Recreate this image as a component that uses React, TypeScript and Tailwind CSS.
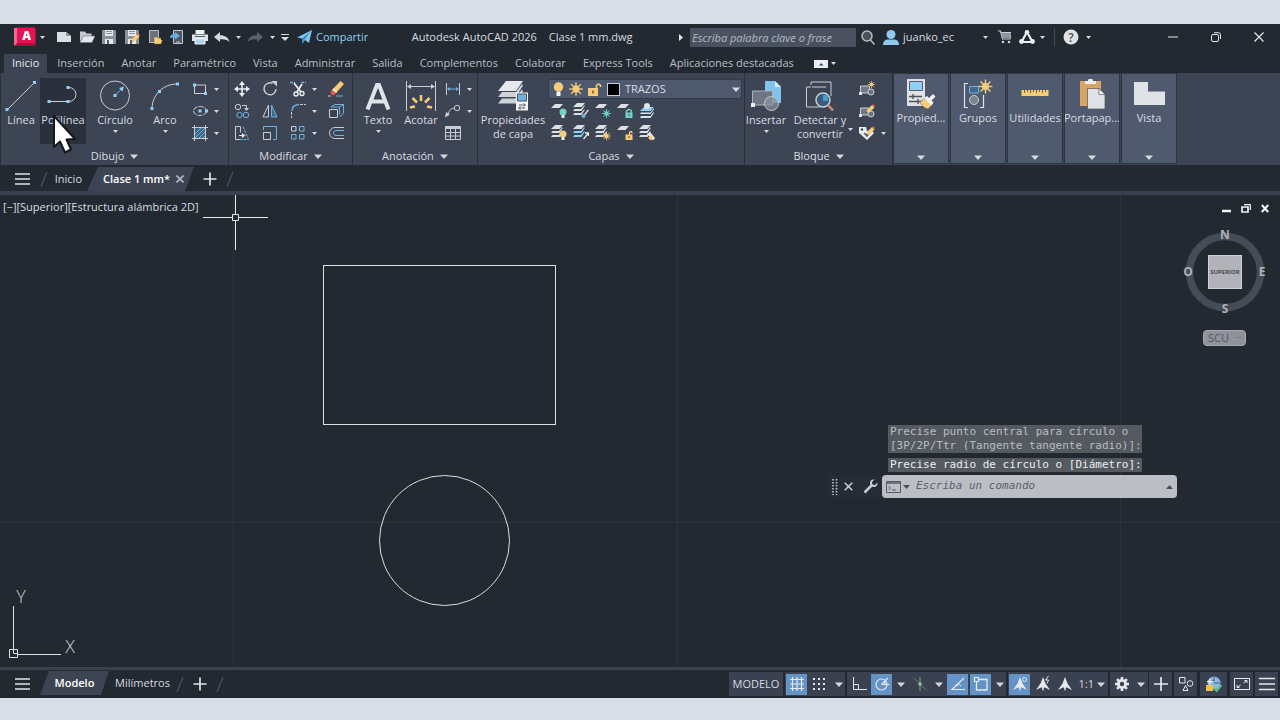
import React from "react";

type IconProps = { w: number; h: number; children: React.ReactNode; className?: string };

function Icon({ w, h, children, className }: IconProps) {
  return (
    <svg width={w} height={h} viewBox={`0 0 ${w} ${h}`} fill="none" className={className} aria-hidden="true">
      {children}
    </svg>
  );
}

const L = "#c9ced6";
const B = "#6fb3de";
const P = "#8fd0f5";
const Y = "#f5cd78";
const T = "#6fd3cc";

function Caret({ big = false }: { big?: boolean }) {
  return big ? (
    <Icon w={8} h={5} className="shrink-0">
      <path d="M0 0.5h8L4 5z" fill="#d6dae0" />
    </Icon>
  ) : (
    <Icon w={5} h={3} className="shrink-0">
      <path d="M0 0h5L2.500 3z" fill="#d6dae0" />
    </Icon>
  );
}

function Btn({ label, className = "w-[22px] h-[22px]", children }: { label: string; className?: string; children: React.ReactNode }) {
  return (
    <button type="button" aria-label={label} className={`flex shrink-0 items-center justify-center ${className}`}>
      {children}
    </button>
  );
}

function Drop({ label, className = "h-[22px] w-2.5" }: { label: string; className?: string }) {
  return (
    <Btn label={label} className={className}>
      <Caret />
    </Btn>
  );
}

/* ---------- Quick access icons ---------- */

const Floppy = () => (
  <>
    <path d="M1 1h13l1 1v13H1z" fill="#8b929c" />
    <path d="M4 1h8v6H4z" fill="#e6e8ec" />
    <path d="M5 2.500h6M5 4.500h6" stroke="#8b929c" />
    <path d="M4 10h8v5H4z" fill="#e6e8ec" />
    <path d="M6 11h2v4H6z" fill="#59606b" />
  </>
);

const Pencil = () => (
  <>
    <path d="M7 13l1-3 5-5 2.500 2.500-5 5z" fill={Y} />
    <path d="M13 5l1-1 2 2-.8 1.300z" fill="#e0584f" />
    <path d="M7 13l.5-1.500 1.200 1z" fill="#222" />
  </>
);

const quickAccess: { label: string; icon: React.ReactNode }[] = [
  { label: "Nuevo", icon: <Icon w={16} h={16}><path d="M1 3h9l5 4v6H1z" fill="#dcdfe4" /><path d="M10 3v4h5z" fill="#9299a3" /></Icon> },
  {
    label: "Abrir",
    icon: <Icon w={16} h={16}><path d="M1 13V2.500h5l1.500 2h5V7H5z" fill="#c3c8d0" /><path d="M4.500 7H16l-3 6.500H1z" fill="#e4e6ea" stroke="#6b727d" strokeWidth=".6" /></Icon>,
  },
  { label: "Guardar", icon: <Icon w={16} h={16}><Floppy /></Icon> },
  { label: "Guardar como", icon: <Icon w={16} h={16}><Floppy /><Pencil /></Icon> },
  {
    label: "Abrir desde web",
    icon: <Icon w={16} h={16}><path d="M2.500 1.500h9v12h-9z" fill="#6d737c" stroke="#b9bec6" /><path d="M7 15V8h3l1 1h3v2h1.500L14 15z" fill={Y} stroke="#5f5233" strokeWidth=".4" /></Icon>,
  },
  {
    label: "Guardar en web",
    icon: <Icon w={16} h={16}><path d="M4.500 1.500h9v13h-9z" fill="#4f5661" stroke="#c3c8d0" /><path d="M7 13h4" stroke="#c3c8d0" /><path d="M1 9c0-3 2-4 5-4V3l5 3.700L6 10.500v-2C4 8.500 2 8.500 1 9z" fill="#62b0e6" /></Icon>,
  },
  {
    label: "Imprimir",
    icon: <Icon w={16} h={16}><path d="M3.500 1h9v4h-9z" fill="#f2f3f5" /><path d="M0 5.500h16V12H0z" fill="#dfe2e7" /><path d="M3 7.500h10" stroke="#5a616c" /><path d="M3 10h10v5H3z" fill="#a6d4f1" stroke="#eef0f3" /></Icon>,
  },
];

const UndoArrow = ({ color }: { color: string }) => (
  <path d="M0 6l6-5v3.200c5 0 8.500 2 9.500 7C13.500 8.500 10.500 8 6 8.200V11z" fill={color} />
);

function TitleBar() {
  return (
    <header className="flex h-[26px] shrink-0 items-center">
      <button type="button" aria-label="Menú de la aplicación" className="ml-3.5 flex w-8 shrink-0 items-center gap-1">
        <Icon w={22} h={20}>
          <path d="M0 1l4-1h16l2 2v16l-2 1H2l-2-1z" fill="#a80f3e" />
          <path d="M0 1l3 0v15l-3 3z" fill="#ee6a8e" />
          <path d="M3 1h18v15H3z" fill="#e01552" />
          <text x="12.500" y="13" textAnchor="middle" fontSize="12" fontWeight="800" fill="#fff">A</text>
        </Icon>
        <Caret />
      </button>
      <div className="ml-[7px] grid w-[158px] shrink-0 grid-cols-7">
        {quickAccess.map((q) => (
          <Btn key={q.label} label={q.label} className="h-5">{q.icon}</Btn>
        ))}
      </div>
      <Btn label="Deshacer" className="h-5 w-[22px]"><Icon w={16} h={13}><UndoArrow color="#d5d9df" /></Icon></Btn>
      <Drop label="Lista de deshacer" />
      <Btn label="Rehacer" className="h-5 w-6"><Icon w={16} h={13}><g transform="translate(16 0) scale(-1 1)"><UndoArrow color="#59616c" /></g></Icon></Btn>
      <Drop label="Lista de rehacer" />
      <Btn label="Personalizar barra" className="h-5 w-4">
        <Icon w={8} h={7}><path d="M0 .5h8" stroke="#d6dae0" /><path d="M0 3h8L4 7z" fill="#d6dae0" /></Icon>
      </Btn>
      <a href="#compartir" className="ml-1 flex shrink-0 items-center gap-1 text-[#8fd0f5]">
        <Icon w={15} h={14}>
          <path d="M0 7.500L15 0l-3 13-4-3-2.500 3.500-.5-5z" fill="#7cc6f2" />
          <path d="M5 8.500L13 2 7.500 9.500 5.600 13z" fill="#3c83b4" />
        </Icon>
        Compartir
      </a>
      <h1 className="flex min-w-0 flex-1 justify-center gap-3 truncate">
        <span>Autodesk AutoCAD 2026</span>
        <span>Clase 1 mm.dwg</span>
      </h1>
      <Btn label="Contraer búsqueda" className="h-5 w-2.5"><Icon w={4} h={7}><path d="M0 0v7l4-3.500z" fill="#e6e8ec" /></Icon></Btn>
      <input
        aria-label="Buscar ayuda"
        placeholder="Escriba palabra clave o frase"
        className="ml-1 h-[19px] w-[166px] shrink-0 bg-[#4a5262] px-0.5 italic text-[#c5cad3] outline-none placeholder:text-[#b4bac5]"
      />
      <Btn label="Buscar" className="h-5 w-6">
        <Icon w={14} h={15}><circle cx="6" cy="6" r="5" stroke="#b9bec6" strokeWidth="1.500" fill="#4a515c" /><path d="M9.500 10l4 4.500" stroke="#b9bec6" strokeWidth="1.500" /></Icon>
      </Btn>
      <button type="button" className="ml-[3px] flex w-[94px] shrink-0 items-center gap-1">
        <Icon w={16} h={15}><circle cx="8" cy="4.500" r="4.500" fill="#8fc9ee" /><path d="M0 15c0-4 2.500-5.500 5-5.500h6c2.500 0 5 1.500 5 5.500z" fill="#8fc9ee" /></Icon>
        juanko_ec
      </button>
      <Drop label="Cuenta" className="ml-[3px] h-5 w-2.5" />
      <Btn label="App Store" className="ml-0.5 h-5 w-6">
        <Icon w={13} h={14}><path d="M0 1h2.500l2 8H12l1-6.500H3" stroke={L} strokeWidth="1.200" /><path d="M3 3h10l-1 5H4.500z" fill="#8d949f" /><circle cx="5" cy="12" r="1.300" fill={L} /><circle cx="11" cy="12" r="1.300" fill={L} /></Icon>
      </Btn>
      <Btn label="Autodesk" className="ml-px h-5 w-5">
        <Icon w={16} h={14}><path d="M8 2L2.500 12h11z" stroke="#eceef1" strokeWidth="2.200" /><circle cx="8" cy="2.300" r="2.300" fill="#eceef1" /><circle cx="2.500" cy="11.500" r="2.400" fill="#eceef1" /><circle cx="13.500" cy="11.500" r="2.400" fill="#eceef1" /></Icon>
      </Btn>
      <Drop label="Opciones de Autodesk" />
      <span className="ml-[7px] h-[18px] w-px shrink-0 bg-[#444b57]" />
      <Btn label="Ayuda" className="ml-1 h-5 w-6">
        <Icon w={16} h={16}><circle cx="8" cy="8" r="7.500" fill="#dfe1e5" /><text x="8" y="12.500" textAnchor="middle" fontSize="12" fontWeight="600" fill="#4a515c">?</text></Icon>
      </Btn>
      <Drop label="Opciones de ayuda" />
      <div className="ml-[58px] flex shrink-0">
        <Btn label="Minimizar" className="h-5 w-[43px]"><Icon w={10} h={2}><path d="M0 1h10" stroke="#e6e8ec" /></Icon></Btn>
        <Btn label="Restaurar" className="h-5 w-[43px]"><Icon w={10} h={10}><rect x=".5" y="2.500" width="7" height="7" rx="1.500" stroke="#e6e8ec" /><path d="M3 .7h4.500q2 0 2 2V7" stroke="#e6e8ec" /></Icon></Btn>
        <Btn label="Cerrar" className="h-5 w-[43px]"><Icon w={10} h={10}><path d="M.5.5l9 9M9.500.5l-9 9" stroke="#e6e8ec" strokeWidth="1.200" /></Icon></Btn>
      </div>
    </header>
  );
}

const menuTabs = ["Inserción", "Anotar", "Paramétrico", "Vista", "Administrar", "Salida", "Complementos", "Colaborar", "Express Tools", "Aplicaciones destacadas"];

function MenuTabs() {
  return (
    <nav className="mt-1 flex h-[19px] shrink-0 items-stretch pl-1 text-[#b9bfc9]">
      <button type="button" className="bg-[#3d4454] px-2 text-[#e6e9ee]">Inicio</button>
      <div className="ml-2.5 flex gap-[17px]">
        {menuTabs.map((t) => (
          <button key={t} type="button" className="whitespace-nowrap">{t}</button>
        ))}
      </div>
      <button type="button" aria-label="Minimizar cinta" className="ml-5 flex items-center gap-[3px]">
        <Icon w={14} h={8}><path d="M0 0h14v8H0z" fill="#eceef1" /><path d="M5 5.500h4.500L7.200 3z" fill="#3d4454" /></Icon>
        <Caret />
      </button>
    </nav>
  );
}

/* ---------- Ribbon ---------- */

function Big({ label, icon, className, drop, hover }: { label: React.ReactNode; icon: React.ReactNode; className: string; drop?: boolean; hover?: boolean }) {
  return (
    <button type="button" className={`flex h-[66px] shrink-0 flex-col items-center ${hover ? "bg-[#2a303c]" : ""} ${className}`}>
      <span className="flex h-[35px] items-center justify-center">{icon}</span>
      <span className="whitespace-nowrap leading-[14px]">{label}</span>
      {drop && <span className="mt-[3px]"><Caret /></span>}
    </button>
  );
}

function Panel({ title, className, children }: { title: string; className: string; children: React.ReactNode }) {
  return (
    <section className={`flex shrink-0 flex-col border-r border-[#2a303b] pt-[5px] ${className}`}>
      <div className="flex flex-1">{children}</div>
      <button type="button" className="flex h-[18px] items-center justify-center gap-1.5">
        {title}
        <Caret big />
      </button>
    </section>
  );
}

type Tool = { label: string; icon: React.ReactNode; drop?: boolean };

function ToolColumn({ tools, className = "" }: { tools: Tool[]; className?: string }) {
  return (
    <div className={`flex flex-col ${className}`}>
      {tools.map((t) => (
        <div key={t.label} className="flex">
          <Btn label={t.label}>{t.icon}</Btn>
          {t.drop && <Drop label={`Más opciones de ${t.label}`} />}
        </div>
      ))}
    </div>
  );
}

const Dot = ({ x, y }: { x: number; y: number }) => <rect x={x - 1.5} y={y - 1.5} width="3" height="3" fill={P} />;

const drawTools: Tool[] = [
  { label: "Rectángulo", drop: true, icon: <Icon w={16} h={14}><path d="M2.500 3h11v8.500h-11z" stroke={L} /><Dot x={2.500} y={3} /><Dot x={13.500} y={11.500} /></Icon> },
  { label: "Elipse", drop: true, icon: <Icon w={16} h={12}><ellipse cx="8" cy="6" rx="6.500" ry="4.500" stroke={L} strokeDasharray="5 1" /><Dot x={8} y={6} /><Dot x={14.500} y={6} /></Icon> },
  { label: "Sombreado", drop: true, icon: <Icon w={16} h={16}><path d="M3 3h10v10H3z" fill="#3f6680" /><path d="M3 9l6-6M3 13L13 3M7 13l6-6M11 13l2-2" stroke={B} /><path d="M2.500 0v16M13.500 0v16M0 2.500h16M0 13.500h16" stroke={L} /></Icon> },
];

const modA: Tool[] = [
  { label: "Desplazar", icon: <Icon w={16} h={16}><path d="M8 2v12M2 8h12" stroke="#eceef1" strokeWidth="1.600" /><path d="M8 0l3 4H5zM8 16l3-4H5zM0 8l4-3v6zM16 8l-4-3v6z" fill="#eceef1" /></Icon> },
  { label: "Copiar", icon: <Icon w={16} h={16}><circle cx="4" cy="4" r="2.700" stroke={L} /><circle cx="5.500" cy="12" r="2.700" stroke={B} /><circle cx="12" cy="12" r="2.700" stroke={B} /><path d="M8 2.500h4.500v3" stroke={L} /><path d="M10 5h5l-2.500 3z" fill={L} /></Icon> },
  { label: "Estirar", icon: <Icon w={16} h={16}><path d="M6.500 14.500h-5v-13h5v6" stroke={L} /><path d="M9 1.500l5.500 13H5" stroke={B} strokeDasharray="3 1" /><path d="M5 10.500h4" stroke="#eceef1" /><path d="M8 8l3.500 2.500L8 13z" fill="#eceef1" /></Icon> },
];
const modB: Tool[] = [
  { label: "Girar", icon: <Icon w={16} h={16}><path d="M10.500 2.300A6 6 0 1 0 14 8" stroke={L} strokeWidth="1.400" /><path d="M9 0h6v5.500z" fill={L} /></Icon> },
  { label: "Simetría", icon: <Icon w={16} h={14}><path d="M6.500 1v12H1z" stroke={L} /><path d="M9.500 1v12H15z" fill="#3d6a89" stroke={B} /></Icon> },
  { label: "Escala", icon: <Icon w={16} h={16}><path d="M1.500 5V1.500h13v13H11" stroke={B} /><path d="M1.500 7.500h7v7h-7z" stroke={L} /></Icon> },
];
const modC: Tool[] = [
  { label: "Recortar", drop: true, icon: <Icon w={16} h={16}><path d="M0 1.500h5M11 1.500h5" stroke={B} strokeWidth="1.300" strokeDasharray="3 1" /><path d="M4 2l7 9M12 3L7 11" stroke="#eceef1" strokeWidth="1.700" /><circle cx="6" cy="13" r="2" stroke="#eceef1" strokeWidth="1.400" /><circle cx="12" cy="12.500" r="2" stroke="#eceef1" strokeWidth="1.400" /></Icon> },
  { label: "Empalme", drop: true, icon: <Icon w={16} h={16}><path d="M2 8Q2 2 9 1.500" stroke={B} strokeWidth="1.300" /><path d="M1.500 9v6M10 1.500h6" stroke={L} strokeDasharray="3 1" /></Icon> },
  { label: "Matriz", drop: true, icon: <Icon w={16} h={16}><path d="M1.500 1.500h4.500v4.500H1.500z" stroke={L} /><path d="M9.500 1.500h4.500v4.500H9.500zM1.500 9.500h4.500v4.500H1.500zM9.500 9.500h4.500v4.500H9.500z" stroke={B} /></Icon> },
];
const modD: Tool[] = [
  { label: "Borrar", icon: <Icon w={16} h={16}><path d="M4 9l8.500-9L16 3 8 12z" fill={Y} /><path d="M4 8.500l4 3.500-1.500 2c-2 1-4-1-4-3z" fill="#e4574f" /><path d="M4.800 8l3.800 3.400" stroke="#f2f3f5" strokeWidth="1.500" /><path d="M8 15h7" stroke={B} /><path d="M0 15h3" stroke={L} /></Icon> },
  { label: "Descomponer", icon: <Icon w={16} h={16}><path d="M1.500 6.500h8v8h-8z" stroke={L} /><path d="M3 4l4-2.500h8.500V10L12 14M3 4h8.500v7.500M11.500 4l4-2.500" stroke={B} /></Icon> },
  { label: "Desfase", icon: <Icon w={16} h={14}><path d="M16 1.500H7a5.500 5.500 0 0 0 0 11h9" stroke={L} /><path d="M16 4.500H8a2.500 2.500 0 0 0 0 5h8" stroke={B} /></Icon> },
];

const annoTools: Tool[] = [
  { label: "Cota lineal", drop: true, icon: <Icon w={16} h={14}><path d="M1.500 1v12M14.500 1v12" stroke={L} /><path d="M3 7h10" stroke={B} /><path d="M2 7l3-2v4zM14 7l-3-2v4z" fill={B} /></Icon> },
  { label: "Directriz", drop: true, icon: <Icon w={16} h={14}><circle cx="12" cy="4" r="2.700" stroke={L} /><path d="M9.500 4.500C6 4 5 5 2.500 11" stroke={L} /><path d="M0 13.500L1 8l4 2.500z" fill={L} /></Icon> },
  { label: "Tabla", icon: <Icon w={16} h={14}><path d="M.5.500h15v13H.5z" stroke={L} /><path d="M.5 2h15" stroke={L} strokeWidth="2" /><path d="M.5 6.500h15M.5 10h15M5.500 3v10.500M10.500 3v10.500" stroke={L} /></Icon> },
];

const Sheet = ({ y, c = "#dcdfe4" }: { y: number; c?: string }) => <path d={`M0 ${y + 4}L4 ${y}h8L8.500 ${y + 4}z`} fill={c} />;
const Stack = ({ mid = "#dcdfe4" }: { mid?: string }) => (
  <>
    <Sheet y={0} />
    <path d="M0 8l1.500-2h6.500l3-3.500h1L8.500 8zM0 12l1.500-2h6.500l3-3.500h1L8.500 12z" fill={mid} />
  </>
);
const Bulb = ({ c }: { c: string }) => (
  <>
    <circle cx="12" cy="9" r="3.500" fill={c} />
    <path d="M10.500 12h3v3h-3z" fill="#eceef1" />
  </>
);
const Lock = ({ c, open }: { c: string; open?: boolean }) => (
  <>
    <path d={open ? "M12.500 10V7.500q2.500-2.500 2.500 1" : "M9.500 10V8q2.500-3 5 0v2"} stroke={c} strokeWidth="1.300" />
    <path d="M8.500 9.500h7V15h-7z" fill={c} />
    <path d="M12 11v2" stroke="#444" />
  </>
);
const Sun = ({ cx, cy, r, c = Y }: { cx: number; cy: number; r: number; c?: string }) => (
  <>
    <circle cx={cx} cy={cy} r={r} fill={c} />
    {[0, 45, 90, 135].map((a) => (
      <path key={a} d={`M${cx} ${cy - r * 2}V${cy + r * 2}`} stroke={c} strokeWidth={r / 2.5} transform={`rotate(${a} ${cx} ${cy})`} />
    ))}
  </>
);

const layerRows: Tool[][] = [
  [
    { label: "Desactivar capa", icon: <Icon w={16} h={16}><Sheet y={1} /><Bulb c={T} /></Icon> },
    { label: "Aislar capa", icon: <Icon w={16} h={16}><Stack /><path d="M15.500 7l-5 6" stroke="#d9dce2" strokeWidth="1.500" /><circle cx="10.500" cy="13" r="2" fill={B} /></Icon> },
    { label: "Inutilizar capa", icon: <Icon w={16} h={16}><Sheet y={1} /><Sun cx={11.500} cy={10.500} r={2.200} c={T} /></Icon> },
    { label: "Bloquear capa", icon: <Icon w={16} h={16}><Sheet y={1} /><Lock c={T} /></Icon> },
    { label: "Definir como actual", icon: <Icon w={16} h={16}><path d="M1 8l4-4h10l-3.500 4z" fill={P} /><path d="M1 11l1-1.500h9.500l3-4 .5 1L11.500 11zM1 15l1-2h9.500l3-4 .5 1L11.500 15z" fill="#cfe6f5" /><circle cx="8" cy="3" r="3" fill="#e0e2e6" /></Icon> },
  ],
  [
    { label: "Activar capas", icon: <Icon w={16} h={16}><Stack /><Bulb c={Y} /></Icon> },
    { label: "Dejar de aislar", icon: <Icon w={16} h={16}><Stack mid={P} /><path d="M15.500 8l-5 6M12 8h3.500v3" stroke="#eceef1" strokeWidth="1.300" /></Icon> },
    { label: "Reutilizar capas", icon: <Icon w={16} h={16}><Stack /><Sun cx={11.500} cy={11} r={2.200} /></Icon> },
    { label: "Desbloquear capa", icon: <Icon w={16} h={16}><Sheet y={1} /><Lock c={Y} open /></Icon> },
    { label: "Igualar capa", icon: <Icon w={16} h={16}><Stack /><path d="M8 9l3-2 5 6-2 2.500z" fill="#e6e8ec" /><path d="M9 13l3-3 2 3-2 2.500z" fill={Y} /></Icon> },
  ],
];

const BlockShape = () => (
  <>
    <path d="M1.500 5h9v7h-9z" fill="#727985" stroke={L} />
    <circle cx="12" cy="11" r="3" fill="#69717d" stroke={L} />
    <path d="M0 11h3v3H0z" fill="#dfe2e7" />
  </>
);
const blockTools: Tool[] = [
  { label: "Crear bloque", icon: <Icon w={16} h={16}><BlockShape /><Sun cx={12.500} cy={3.500} r={1.800} /></Icon> },
  { label: "Editar bloque", icon: <Icon w={16} h={16}><BlockShape /><g transform="translate(0 -3)"><Pencil /></g></Icon> },
  { label: "Editar atributos", drop: true, icon: <Icon w={16} h={16}><path d="M0 2h7l1 4 4-1 3 3-7 7-8-7z" fill="#eceef1" /><circle cx="3" cy="4.500" r="1.200" fill="#3d4454" /><path d="M5 8l3 3 3-4" stroke="#555c68" strokeWidth="1.500" /><g transform="translate(0 -3)"><Pencil /></g></Icon> },
];

const collapsed: Tool[] = [
  {
    label: "Propied...",
    icon: (
      <Icon w={30} h={30}>
        <path d="M1 0h18v27H1z" fill="#e0e2e6" />
        <path d="M3.500 2.500h13v9h-13z" fill="#8fd0f5" stroke="#59606b" />
        <path d="M3 17.500h13M3 22.500h13M7 15v5M12 20v5" stroke="#4b525e" strokeWidth="1.400" />
        <path d="M14 23l5-4 7 7-4 4c-4-1-7-4-8-7z" fill={Y} stroke="#4f5a6e" strokeWidth=".5" />
        <path d="M18 19l3-2 2 2 4-4 2.500 2.500-4 4 2 2-2 3z" fill="#f2f3f5" />
      </Icon>
    ),
  },
  {
    label: "Grupos",
    icon: (
      <Icon w={30} h={30}>
        <path d="M5 4.500H1.500v24H5M17 28.500h3.500V16" stroke="#dfe2e7" strokeWidth="1.200" />
        <path d="M6.500 7.500h9V14h-9z" fill="#416a8a" stroke={B} />
        <circle cx="11" cy="21" r="4.500" fill="#7b8290" stroke="#c9ced6" />
        <Sun cx={22.500} cy={7.500} r={3.500} />
      </Icon>
    ),
  },
  {
    label: "Utilidades",
    icon: (
      <Icon w={30} h={30}>
        <path d="M1.500 11h27v6h-27z" fill={Y} />
        <path d="M4.500 11v3M7.500 11v2M10.500 11v3M13.500 11v2M16.500 11v3M19.500 11v2M22.500 11v3M25.500 11v2" stroke="#7a6334" />
      </Icon>
    ),
  },
  {
    label: "Portapap...",
    icon: (
      <Icon w={30} h={30}>
        <path d="M3 2h21v25H3z" fill="#d9a468" />
        <path d="M8 5V2h3a2.500 2.500 0 0 1 5 0h3v3z" fill="#eceef1" />
        <path d="M10.500 9.500H22l6 6V30H10.500z" fill="#dfe1e6" stroke="#5a5048" strokeWidth=".7" />
        <path d="M22 9.500v6h6z" fill="#f7f8f9" stroke="#444" strokeWidth=".6" />
      </Icon>
    ),
  },
  { label: "Vista", icon: <Icon w={32} h={30}><path d="M1 3h14v9.500h17V26H1z" fill="#e0e2e6" /></Icon> },
];

const SmallStackBig = () => (
  <Icon w={32} h={32}>
    <path d="M1 11L9 1h17l-7 10z" fill="#e6e8ec" />
    <path d="M1 17l4-5h14l6-8 1 1.500L19 17zM1 23.500l4-5h13l7-9 1 1.500-7 12.500z" fill="#cfd3d9" />
    <path d="M19 12.500h12v18H19z" fill="#f2f3f5" />
    <path d="M20.500 14h9v7h-9z" fill="#6fb3de" stroke="#4b525e" />
    <path d="M22 25h6M22 28h6M26.500 23.500l2 1.500-2 1.500M23.500 26.500l-2 1.500 2 1.500" stroke="#4b525e" strokeWidth=".9" />
  </Icon>
);

function Ribbon() {
  return (
    <div className="flex h-[92px] shrink-0 border-l border-[#2a303b] bg-[#3d4454]">
      <Panel title="Dibujo" className="w-[228px]">
        <Big label="Línea" className="ml-px w-[38px]" icon={<Icon w={32} h={32}><path d="M2 30L29 3" stroke={L} /><Dot x={2} y={29.500} /><Dot x={29.500} y={2.500} /></Icon>} />
        <Big label="Polilínea" hover className="w-[46px]" icon={<Icon w={32} h={28}><path d="M2 19.500h20a7 7 0 0 0 0-14" stroke={L} /><Dot x={2} y={19.500} /><Dot x={21} y={19.500} /><Dot x={21} y={5.500} /></Icon>} />
        <Big label="Círculo" drop className="w-[58px]" icon={<Icon w={32} h={32}><circle cx="16" cy="15.500" r="14.500" stroke={L} /><path d="M16 15.500l7-7" stroke={B} /><Dot x={16} y={15.500} /><path d="M25 6.500l-5 1.500 3.500 3.500z" fill={P} /></Icon>} />
        <Big label="Arco" drop className="w-[42px]" icon={<Icon w={32} h={32}><path d="M3 29C3 15 14 4 28 4" stroke={L} /><Dot x={3} y={28.500} /><Dot x={10.500} y={11.500} /><Dot x={28.500} y={4} /></Icon>} />
        <ToolColumn tools={drawTools} className="ml-[3px]" />
      </Panel>
      <Panel title="Modificar" className="w-[124px]">
        <div className="ml-0.5 flex gap-1.5">
          <ToolColumn tools={modA} />
          <ToolColumn tools={modB} />
          <ToolColumn tools={modC} />
          <ToolColumn tools={modD} />
        </div>
      </Panel>
      <Panel title="Anotación" className="w-[125px]">
        <Big label="Texto" drop className="ml-[3px] w-11" icon={<Icon w={26} h={28}><path d="M2.500 27.500L12 3h2l9.500 24.500M6.500 19.500h13" stroke="#e0e3e8" strokeWidth="4" /></Icon>} />
        <Big label="Acotar" className="w-[42px]" icon={<Icon w={32} h={32}><path d="M1.500 1v30M30.500 1v30" stroke={L} /><path d="M4 6.500h24" stroke={L} /><path d="M2 6.500l4-2.500v5zM30 6.500l-4-2.500v5z" fill={L} /><path d="M16 21v-6M12 22.500l-4.500-4.500M20 22.500l4.500-4.500M10 26.500l-5 1M22 26.500l5 1" stroke={Y} strokeWidth="2.500" /></Icon>} />
        <ToolColumn tools={annoTools} />
      </Panel>
      <Panel title="Capas" className="w-[267px]">
        <Big label={<>Propiedades<br />de capa</>} className="w-[70px]" icon={<SmallStackBig />} />
        <div className="flex flex-col pt-px">
          <div className="flex h-5 w-[194px] items-center gap-[5px] border border-[#333a47] bg-[#4f596d] pl-1">
            <Icon w={11} h={14}><circle cx="5.500" cy="5" r="4.700" fill={Y} /><path d="M3.500 9.500h4V14h-4z" fill="#f2f3f5" /></Icon>
            <Icon w={14} h={14}><Sun cx={7} cy={7} r={3.400} /></Icon>
            <Icon w={14} h={15}><path d="M8.500 7V3.500q2-3 4 0V5" stroke={Y} strokeWidth="1.600" /><path d="M0 6h10v8H0z" fill={Y} /><path d="M5 8.500v3" stroke="#6b5327" strokeWidth="1.500" /></Icon>
            <span className="h-[13px] w-[13px] shrink-0 border border-[#c9ced6] bg-black" />
            <div className="relative flex h-full flex-1 items-center">
              <select aria-label="Capa actual" className="h-[18px] w-full appearance-none bg-transparent leading-[18px] outline-none">
                <option>TRAZOS</option>
              </select>
              <span className="pointer-events-none absolute right-px"><Caret big /></span>
            </div>
          </div>
          {layerRows.map((row, i) => (
            <div key={i} className={i === 0 ? "mt-px flex" : "flex"}>
              {row.map((t) => <Btn key={t.label} label={t.label}>{t.icon}</Btn>)}
            </div>
          ))}
        </div>
      </Panel>
      <Panel title="Bloque" className="w-[148px]">
        <Big label="Insertar" drop className="w-[42px]" icon={<Icon w={32} h={32}><path d="M15 1h10l6 6v16H15z" fill="#7fc4ee" /><path d="M25 1v6h6z" fill="#d3ebfa" /><path d="M2.500 11h20v14h-20z" fill="#707683" stroke="#aeb4be" /><circle cx="21.500" cy="23.500" r="7" fill="#8a909b" fillOpacity=".7" stroke="#c3c8d0" /><path d="M1 23h4v4H1z" fill="#eceef1" /></Icon>} />
        <Big label={<>Detectar y<br />convertir</>} className="ml-1 w-[58px]" icon={<Icon w={32} h={32}><path d="M7 5V2h20v14M7 7H2.500v20h13" stroke={L} /><path d="M8 7h14" stroke={L} /><circle cx="19" cy="20" r="7" fill="#3b5c78" stroke={L} strokeWidth="1.500" /><path d="M19 15h5v6h-5z" fill="#4c9ad0" /><path d="M24 25l5 5.500" stroke="#c98f6b" strokeWidth="2.500" /></Icon>} />
        <Drop label="Más opciones de detectar" className="-ml-1 mt-10 h-[22px] w-2.5" />
        <ToolColumn tools={blockTools} className="ml-px" />
      </Panel>
      <div className="ml-px flex gap-[3px]">
        {collapsed.map((c) => (
          <button key={c.label} type="button" className="mb-0.5 mt-px flex w-[54px] flex-col items-center bg-[#505a6e] outline outline-[#2f3643]">
            <span className="mt-1 flex h-8 items-center">{c.icon}</span>
            <span className="leading-4">{c.label}</span>
            <span className="mb-[3px] mt-auto"><Caret big /></span>
          </button>
        ))}
      </div>
    </div>
  );
}

/* ---------- Tabs ---------- */

const Burger = ({ label }: { label: string }) => (
  <Btn label={label} className="h-full w-[44px]">
    <Icon w={15} h={12}><path d="M0 1h15M0 6h15M0 11h15" stroke="#e0e3e8" strokeWidth="1.700" /></Icon>
  </Btn>
);
const Slash = () => <Icon w={8} h={15} className="shrink-0"><path d="M1 15L7 0" stroke="#4c5361" strokeWidth="1.200" /></Icon>;
const Plus = ({ label }: { label: string }) => (
  <Btn label={label} className="h-full w-8">
    <Icon w={14} h={14}><path d="M7 .5v13M.5 7h13" stroke="#e0e3e8" strokeWidth="1.700" /></Icon>
  </Btn>
);

function DocumentTabs() {
  return (
    <nav className="flex h-[30px] shrink-0 items-center border-b-4 border-[#3a404d] pt-0.5">
      <Burger label="Menú de archivos" />
      <span className="-ml-1"><Slash /></span>
      <button type="button" className="w-[34px] text-right">Inicio</button>
      <div className="ml-[5px] flex h-full w-[107px] items-center gap-1.5 bg-[#3d4454] pl-4 font-semibold text-white [clip-path:polygon(11px_0,100%_0,calc(100%_-_9px)_100%,0_100%)]">
        <button type="button" className="whitespace-nowrap">Clase 1 mm*</button>
        <button type="button" aria-label="Cerrar pestaña">
          <Icon w={8} h={8}><path d="M.5.5l7 7M7.500.5l-7 7" stroke="#b4bac5" strokeWidth="1.600" /></Icon>
        </button>
      </div>
      <Plus label="Nueva pestaña" />
      <Slash />
    </nav>
  );
}

/* ---------- Drawing area ---------- */

function Canvas() {
  return (
    <main className="relative min-h-[440px] flex-1 overflow-hidden bg-[#222930]">
      <svg className="absolute inset-0 h-full w-full" fill="none" aria-label="Dibujo">
        <path d="M233.500 0v2000M677.500 0v2000M1120.500 0v2000M0 327.500h4000" stroke="#2d343d" />
        <path d="M323.500 70.500h232v159h-232z" stroke="#dcdfe3" shapeRendering="crispEdges" />
        <circle cx="444.500" cy="345.500" r="65" stroke="#dcdfe3" />
        <path d="M203 22.500h29M239 22.500h29M235.500 0v19M235.500 26v29" stroke="#e6e8ec" />
        <path d="M232.500 19.500h6v6h-6z" stroke="#e6e8ec" />
      </svg>
      <span className="absolute left-[3px] top-1 whitespace-nowrap leading-4">[−][Superior][Estructura alámbrica 2D]</span>
      <Icon w={82} h={88} className="absolute bottom-0 left-0">
        <path d="M13.500 27v44M18 75.500h43" stroke="#dcdfe3" />
        <path d="M9.500 70.500h8v8h-8zM13.500 70.500v4h4" stroke="#dcdfe3" />
        <text x="21" y="24" textAnchor="middle" fontSize="18" fontWeight="300" fill="#c9ced6">Y</text>
        <text x="70" y="74" textAnchor="middle" fontSize="18" fontWeight="300" fill="#c9ced6">X</text>
      </Icon>

      <div className="absolute right-1.5 top-[5px] flex">
        <Btn label="Minimizar dibujo" className="h-4 w-[19px]"><Icon w={9} h={9}><path d="M0 7h9" stroke="#f2f3f5" strokeWidth="2.500" /></Icon></Btn>
        <Btn label="Restaurar dibujo" className="h-4 w-[19px]"><Icon w={10} h={9}><path d="M1 3h6v5H1z" stroke="#f2f3f5" strokeWidth="1.700" /><path d="M3 .7h6.300V6" stroke="#f2f3f5" strokeWidth="1.200" /></Icon></Btn>
        <Btn label="Cerrar dibujo" className="h-4 w-[19px]"><Icon w={8} h={9}><path d="M.8 1l6.400 7M7.200 1L.8 8" stroke="#f2f3f5" strokeWidth="2" /></Icon></Btn>
      </div>

      <div className="absolute right-[11px] top-[33px] grid w-[88px] grid-cols-[14px_1fr_14px] grid-rows-[14px_60px_14px] place-items-center text-[12px] font-bold leading-none text-[#adb2ba]">
        <svg className="absolute left-1 top-1" width="80" height="80" viewBox="0 0 80 80" fill="none" aria-hidden="true">
          <circle cx="40" cy="40" r="35.500" stroke="#454c56" strokeWidth="7.500" />
        </svg>
        <span className="relative col-start-2 row-start-1">N</span>
        <span className="relative col-start-1 row-start-2">O</span>
        <button type="button" className="relative col-start-2 row-start-2 flex h-[34px] w-[34px] items-center justify-center border border-[#cfd0d4] bg-[#b2b3b8] text-[6px] text-[#454952]">SUPERIOR</button>
        <span className="relative col-start-3 row-start-2">E</span>
        <span className="relative col-start-2 row-start-3">S</span>
      </div>
      <button type="button" className="absolute right-[34px] top-[135px] flex h-4 w-[43px] items-center justify-between rounded border border-[#a9abb3] bg-[#8f919b] px-1 text-[#555963]">
        SCU
        <Icon w={6} h={3}><path d="M0 .5h6" stroke="#777a85" /></Icon>
      </button>

      <form className="absolute bottom-[169px] right-[103px] flex w-[349px] flex-col font-['DejaVu_Sans_Mono',monospace]" onSubmit={(e) => e.preventDefault()}>
        <div className="ml-[60px] w-[254px] whitespace-nowrap bg-[#555a61] px-0.5 leading-[14px] text-[#b9bdc3]">
          Precise punto central para círculo o<br />[3P/2P/Ttr (Tangente tangente radio)]:
        </div>
        <div className="ml-[60px] mt-[5px] w-[254px] whitespace-nowrap bg-[#555a61] px-0.5 leading-[14px] text-[#eceef1]">
          Precise radio de círculo o [Diámetro]:
        </div>
        <div className="mt-[3px] flex h-[23px] items-center bg-[#262c35]">
          <Icon w={6} h={16} className="ml-1 shrink-0"><path d="M1 0v16M4.500 0v16" stroke="#c9ced6" strokeWidth="1.500" strokeDasharray="1.500 1.500" /></Icon>
          <Btn label="Cerrar línea de comandos" className="h-5 w-[20px]"><Icon w={9} h={9}><path d="M.7.7l7.600 7.600M8.300.7L.7 8.300" stroke="#c9ced6" strokeWidth="1.500" /></Icon></Btn>
          <Btn label="Personalizar" className="h-5 w-6">
            <Icon w={15} h={15}><path d="M1.500 13.500L9 6" stroke="#c9ced6" strokeWidth="2.500" /><path d="M14.500 3.500L12 6 9.500 5.500 9 3l2.500-2.500C8.500 0 6.500 2 7 5l3 3c3 .5 5-1.500 4.500-4.500z" fill="#c9ced6" /></Icon>
          </Btn>
          <div className="flex h-full flex-1 items-center rounded-sm bg-[#bcbec5] pl-1 pr-1">
            <Btn label="Comandos recientes" className="h-5 w-[24px] gap-0.5">
              <Icon w={15} h={12}><path d="M.5.500h14v11H.5z" stroke="#555a66" /><path d="M.5 2h14" stroke="#555a66" strokeWidth="1.500" /><path d="M2.500 5l2 2-2 2M6 9h4" stroke="#555a66" /></Icon>
              <Icon w={7} h={4}><path d="M0 0h7L3.500 4z" fill="#4a4f5a" /></Icon>
            </Btn>
            <input aria-label="Línea de comandos" placeholder="Escriba un comando" className="ml-1.5 min-w-0 flex-1 bg-transparent italic text-[#3a3f49] outline-none placeholder:text-[#5b606b]" />
            <Btn label="Historial" className="h-5 w-2"><Icon w={7} h={4}><path d="M0 4h7L3.500 0z" fill="#4a4f5a" /></Icon></Btn>
          </div>
        </div>
      </form>
    </main>
  );
}

/* ---------- Status bar ---------- */

function Toggle({ label, on, children, className = "w-[23px]" }: { label: string; on?: boolean; children: React.ReactNode; className?: string }) {
  return (
    <button type="button" aria-label={label} aria-pressed={!!on} className={`flex h-full shrink-0 items-center justify-center ${className}`}>
      <span className={`flex h-[21px] w-[21px] items-center justify-center ${on ? "bg-[#6493c6]" : ""}`}>{children}</span>
    </button>
  );
}

function StatusDrop({ label, className = "w-[15px]" }: { label: string; className?: string }) {
  return (
    <Btn label={label} className={`h-full ${className}`}>
      <Caret big />
    </Btn>
  );
}

const Group = ({ children, className = "" }: { children: React.ReactNode; className?: string }) => (
  <div className={`flex h-6 shrink-0 items-center bg-[#3a4150] ${className}`}>{children}</div>
);

const W = "#e6e8ec";
const Person = () => <path d="M8 1l2.500 6.500L15 14l-5-2.500H9l-.5 3h-1l-.5-3H6L1 14l4.500-6.500z" fill={W} />;

function StatusBar() {
  return (
    <footer className="flex h-[31px] shrink-0 items-center border-t-[3px] border-[#3a404d]">
      <Burger label="Menú de presentaciones" />
      <button type="button" className="-ml-1 mt-px h-6 w-[69px] self-start bg-[#3d4454] text-center font-semibold text-white [clip-path:polygon(9px_0,100%_0,calc(100%_-_8px)_100%,0_100%)]">Modelo</button>
      <button type="button" className="mt-px h-6 w-[67px] self-start text-center">Milímetros</button>
      <Slash />
      <Plus label="Nueva presentación" />
      <Slash />
      <div className="ml-auto flex items-center">
        <Group className="w-[54px] justify-center"><button type="button" className="font-medium">MODELO</button></Group>
        <Group className="ml-0.5 w-[60px]">
          <Toggle label="Rejilla" on><Icon w={16} h={16}><path d="M3.500 1v14M8 1v14M12.500 1v14M1 3.500h14M1 8h14M1 12.500h14" stroke={W} strokeWidth="1.200" /></Icon></Toggle>
          <Toggle label="Forzar cursor"><Icon w={14} h={14}><path d="M0 2h14M0 7h14M0 12h14" stroke={W} strokeWidth="2" strokeDasharray="2 3" /></Icon></Toggle>
          <StatusDrop label="Opciones de forzar cursor" />
        </Group>
        <Group className="ml-0.5 w-[159px]">
          <Toggle label="Orto"><Icon w={16} h={16}><path d="M2.500 1v12.500H16M2.500 8.500h5v5" stroke={W} /></Icon></Toggle>
          <Toggle label="Rastreo polar" on><Icon w={16} h={16}><circle cx="7.500" cy="8.500" r="5.500" stroke={W} strokeWidth="1.200" /><path d="M7.500 8.500h8M7.500 8.500L14 2M11 5v3" stroke={W} strokeWidth="1.200" /></Icon></Toggle>
          <StatusDrop label="Opciones polares" />
          <Toggle label="Dibujo isométrico"><Icon w={16} h={16}><path d="M8 1v14" stroke="#62b567" /><path d="M2 2l12 12" stroke="#9a5c63" /><path d="M6.500 6.500h3v3h-3z" fill="#9cc7a0" /></Icon></Toggle>
          <StatusDrop label="Opciones isométricas" />
          <Toggle label="Rastreo de referencia" on><Icon w={16} h={16}><path d="M14 2L2 13.500h13" stroke={W} strokeWidth="1.200" /><path d="M8 7l3 3M6 8l2 2" stroke={W} /></Icon></Toggle>
          <Toggle label="Referencia a objetos" on><Icon w={16} h={16}><path d="M6 3.500h8v10.500H3.500V6" stroke={W} strokeWidth="1.300" /><path d="M1.500 1.500h4v4h-4z" stroke={W} strokeWidth="1.200" /></Icon></Toggle>
          <StatusDrop label="Opciones de referencia" />
        </Group>
        <Group className="ml-0.5 w-[100px]">
          <Toggle label="Visibilidad de anotación" on><Icon w={16} h={16}><Person /><circle cx="12.500" cy="3.500" r="2" stroke={W} /></Icon></Toggle>
          <Toggle label="Escala automática"><Icon w={16} h={16}><Person /><path d="M13.500 0l-3 4h3l-1.500 3.500" stroke={W} /></Icon></Toggle>
          <Toggle label="Escala de anotación" className="w-[22px]"><Icon w={16} h={16}><Person /></Icon></Toggle>
          <button type="button" className="flex flex-1 items-center justify-end gap-[3px] pr-[3px]">1:1<Caret big /></button>
        </Group>
        <Group className="ml-0.5 w-[38px]">
          <Toggle label="Espacio de trabajo">
            <Icon w={16} h={16}>
              {[0, 45, 90, 135].map((a) => <path key={a} d="M8 1v14" stroke={W} strokeWidth="2.600" transform={`rotate(${a} 8 8)`} />)}
              <circle cx="8" cy="8" r="5" fill={W} />
              <circle cx="8" cy="8" r="2.200" fill="#3a4150" />
            </Icon>
          </Toggle>
          <StatusDrop label="Opciones de espacio" />
        </Group>
        <Group className="ml-px"><Toggle label="Monitor de anotaciones"><Icon w={14} h={14}><path d="M7 0v14M0 7h14" stroke={W} strokeWidth="1.700" /></Icon></Toggle></Group>
        <Group className="ml-0.5"><Toggle label="Aislar objetos"><Icon w={16} h={16}><path d="M1.500 1.500h5.500v5.500H1.500zM5 14.500l2.500-5 2.500 5z" stroke={W} /><circle cx="12" cy="7.500" r="2.800" stroke={W} /></Icon></Toggle></Group>
        <Group className="ml-[3px]">
          <Toggle label="Rendimiento gráfico" className="w-[27px]">
            <Icon w={16} h={16}><circle cx="8" cy="7" r="6.500" fill="#8fb8df" /><path d="M4 5h4V1M8 7h6" stroke="#38608c" /><path d="M1 5.500h6M4 2.500v6" stroke="#fff" /><path d="M0 9h7v6H0z" fill="#f0c243" /><path d="M8 12l2.500 3L15.500 9" stroke="#62c08a" strokeWidth="2" /></Icon>
          </Toggle>
        </Group>
        <Group className="ml-[3px]"><Toggle label="Limpiar pantalla"><Icon w={16} h={14}><path d="M.5 1.500h15v11H.5z" stroke={W} /><path d="M9.500 6L13 3.500M10.500 3.500H13v2.500M6.500 8L3 10.500M5.500 10.500H3V8" stroke={W} /></Icon></Toggle></Group>
        <Group className="ml-0.5"><Toggle label="Personalización"><Icon w={16} h={14}><path d="M0 1.500h16M0 7h16M0 12.500h16" stroke={W} strokeWidth="1.700" /></Icon></Toggle></Group>
        <span className="w-0.5" />
      </div>
    </footer>
  );
}

export default function App() {
  return (
    <div className="flex min-h-screen flex-col bg-[#d9dde5] pb-[22px] pt-6 font-['Open_Sans','Noto_Sans',sans-serif] text-[11px] text-[#d8dce3]">
      <div className="relative flex flex-1 flex-col bg-[#222930]">
        <TitleBar />
        <MenuTabs />
        <Ribbon />
        <DocumentTabs />
        <Canvas />
        <StatusBar />
        <svg width="26" height="42" viewBox="0 0 26 42" className="pointer-events-none absolute left-[52px] top-[90px]" aria-hidden="true">
          <path d="M2 2v31l6-5.500 5 11 6-3-4.500-10L23 25z" fill="#fff" stroke="#15181d" strokeWidth="2" strokeLinejoin="round" />
        </svg>
      </div>
    </div>
  );
}
